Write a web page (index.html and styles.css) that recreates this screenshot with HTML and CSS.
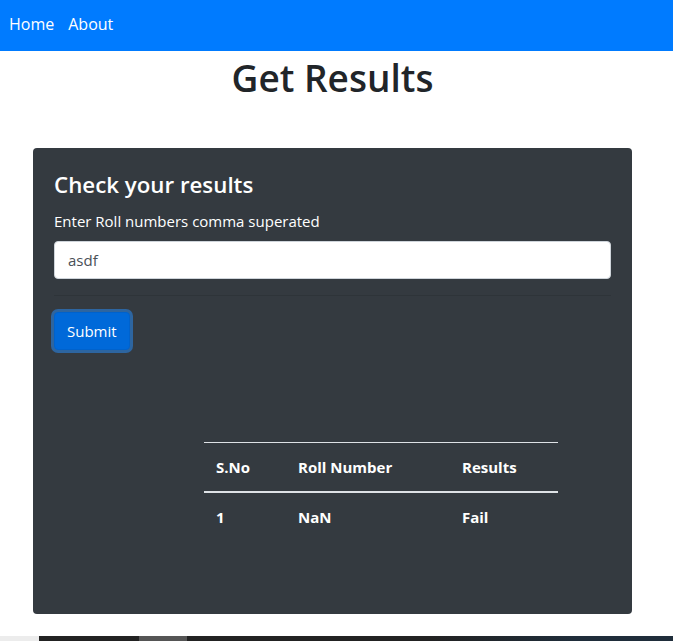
FILE: index.html
```html
<!DOCTYPE html>
<html>
<head>
<meta charset="utf-8">
<link rel="stylesheet" href="styles.css">
</head>
<body>
<nav class="navbar">
  <a class="nav-link" href="#">Home</a>
  <a class="nav-link" href="#">About</a>
</nav>
<h1 class="page-title">Get Results</h1>
<div class="card">
  <h3 class="card-title">Check your results</h3>
  <label class="label">Enter Roll numbers comma superated</label>
  <div class="input">asdf</div>
  <hr class="divider">
  <button class="btn">Submit</button>
  <table class="results">
    <thead>
      <tr><th class="c1">S.No</th><th class="c2">Roll Number</th><th class="c3">Results</th></tr>
    </thead>
    <tbody>
      <tr><td>1</td><td>NaN</td><td>Fail</td></tr>
    </tbody>
  </table>
</div>
<div class="taskbar">
  <span class="tb-a"></span><span class="tb-b"></span><span class="tb-c"></span><span class="tb-d"></span>
</div>
</body>
</html>
```
FILE: styles.css
```css
html, body { margin: 0; padding: 0; }
body {
  font-family: "Open Sans", "Noto Sans", sans-serif;
  color: #212529;
  background: #fff;
  width: 673px;
  height: 641px;
  overflow: hidden;
  position: relative;
}
.navbar {
  height: 51px;
  background: #007bff;
  display: flex;
  align-items: center;
  padding-left: 9px;
  padding-bottom: 3px;
  box-sizing: border-box;
  gap: 14px;
}
.nav-link {
  color: #fff;
  text-decoration: none;
  font-size: 16px;
}
.page-title {
  margin: 0;
  padding-top: 3px;
  padding-right: 8px;
  text-align: center;
  font-size: 37px;
  font-weight: 600;
  line-height: 48px;
  color: #212529;
}
.card {
  margin: 46px 0 0 33px;
  width: 557px;
  height: 424px;
  background: #343a40;
  border-radius: 4px;
  padding: 21px;
  color: #fff;
}
.card-title {
  margin: 0;
  font-size: 22.3px;
  font-weight: 600;
  line-height: 32px;
}
.label {
  display: block;
  font-size: 15px;
  line-height: 24px;
  margin-top: 8px;
}
.input {
  margin-top: 8px;
  height: 36px;
  border: 1px solid #ced4da;
  border-radius: 4px;
  background: #fff;
  color: #495057;
  font-size: 15px;
  line-height: 36px;
  padding: 0 13px;
}
.divider {
  margin: 16px 0 0;
  border: 0;
  border-top: 1px solid rgba(0,0,0,0.1);
}
.btn {
  margin-top: 16px;
  height: 38px;
  padding: 0 12px;
  font-family: inherit;
  font-size: 15px;
  color: #fff;
  background: #0069d9;
  border: 1px solid #0062cc;
  border-radius: 4px;
  box-shadow: 0 0 0 3px rgba(38,143,255,0.5);
}
.results {
  margin-top: 92px;
  margin-left: 150px;
  width: 354px;
  border-collapse: collapse;
  color: #fff;
  font-weight: 700;
  font-size: 15px;
}
.results th, .results td {
  text-align: left;
  padding: 12px;
  line-height: 24px;
}
.results th { border-top: 1px solid #dee2e6; border-bottom: 2px solid #dee2e6; }
.c1 { width: 58px; }
.c2 { width: 140px; }
.taskbar {
  position: absolute;
  left: 0;
  right: 0;
  bottom: 0;
  height: 5px;
  display: flex;
}
.tb-a { width: 39px; background: #ececec; }
.tb-b { width: 100px; background: #222; }
.tb-c { width: 48px; background: #555; }
.tb-d { flex: 1; background: linear-gradient(to right, #222 0, #222 50%, #1f2d3a 80%, #1f2d3a 100%); }
```
